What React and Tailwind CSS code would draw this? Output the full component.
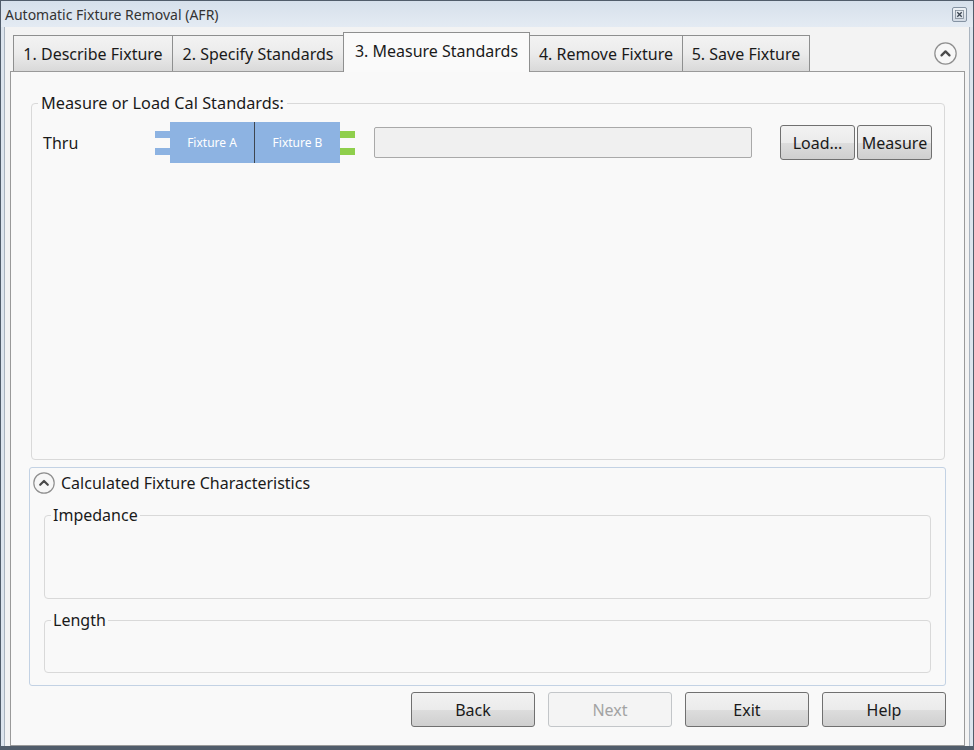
import React from "react";

const font = "font-['Noto_Sans','Open_Sans',sans-serif]";

function Chevron({ size = 22 }) {
  return (
    <svg width={size} height={size} viewBox="0 0 22 22">
      <circle cx="11" cy="11" r="10.2" fill="#f7f7f7" stroke="#8f8f8f" strokeWidth="1.2" />
      <path d="M7.2 12.8 L11 9 L14.8 12.8" fill="none" stroke="#4a4a4a" strokeWidth="2.2" strokeLinecap="round" strokeLinejoin="round" />
    </svg>
  );
}

function Tab({ label, active, w }) {
  if (active) {
    return (
      <div className={`${w} h-[40px] -mb-[1px] -ml-[1px] relative z-10 border border-b-0 border-[#8e8f8f] bg-[#fafafa] flex items-start justify-center pt-[7px] text-[16px] leading-[22px] text-[#1a1a1a]`}>
        {label}
      </div>
    );
  }
  return (
    <div className={`${w} h-[36px] -ml-[1px] first:ml-0 border border-b-0 border-[#8e8f8f] bg-gradient-to-b from-[#f3f3f3] via-[#ebebeb] to-[#d9d9d9] flex items-center justify-center text-[16px] leading-[22px] text-[#1a1a1a]`}>
      {label}
    </div>
  );
}

function Btn({ children, className = "", disabled }) {
  if (disabled) {
    return (
      <div className={`flex items-center justify-center rounded-[3px] border border-[#c3c6c9] bg-[#f4f4f4] text-[#a3a3a3] text-[16px] ${className}`}>
        {children}
      </div>
    );
  }
  return (
    <div className={`flex items-center justify-center rounded-[3px] border border-[#707070] bg-[linear-gradient(to_bottom,#f2f2f2_0%,#ebebeb_50%,#dddddd_51%,#cfcfcf_100%)] text-[#1a1a1a] text-[16px] ${className}`}>
      {children}
    </div>
  );
}

export default function App() {
  return (
    <div className={`${font} w-[974px] h-[750px] bg-[#515d6b] pt-[1px] px-[1px] pb-[4px] flex flex-col`}>
      <div className="flex-1 flex flex-col bg-[#dde5ee] px-[3px]">
        {/* Title bar */}
        <div className="h-[26px] -mx-[3px] px-[4px] flex items-center justify-between bg-gradient-to-b from-[#d6e0eb] to-[#e4ebf3]">
          <span className="text-[14px] text-[#333] leading-none pt-[1px]">Automatic Fixture Removal (AFR)</span>
          <div className="w-[15px] h-[15px] mr-[2px] mt-[1px] rounded-[2px] border border-[#8593a3] bg-gradient-to-b from-[#eef2f6] to-[#d3dbe5] flex items-center justify-center">
            <svg width="9" height="9" viewBox="0 0 9 9">
              <rect x="0.5" y="0.5" width="8" height="8" fill="none" stroke="#7f8a96" strokeWidth="0.8" />
              <path d="M2.3 2.3 L6.7 6.7 M6.7 2.3 L2.3 6.7" stroke="#3c4652" strokeWidth="1.3" />
            </svg>
          </div>
        </div>
        {/* Client */}
        <div className="flex-1 flex flex-col bg-[#f3f3f3] border-x border-[#aab4bf] pl-[5px] pr-[4px] pt-[5px]">
          {/* Tabs row */}
          <div className="h-[39px] flex items-end pl-[3px] relative">
            <Tab w="w-[160px]" label="1. Describe Fixture" />
            <Tab w="w-[172px]" label="2. Specify Standards" />
            <Tab w="w-[187px]" label="3. Measure Standards" active />
            <Tab w="w-[154px]" label="4. Remove Fixture" />
            <Tab w="w-[128px]" label="5. Save Fixture" />
            <div className="flex-1" />
            <div className="self-start mt-[10px] mr-[8px]">
              <Chevron size={23} />
            </div>
          </div>
          {/* Panel */}
          <div className="flex-1 border border-[#9a9a9a] bg-[#f9f9f9] flex flex-col">
            {/* Group 1 */}
            <fieldset className="mt-[21px] ml-[20px] mr-[19px] h-[367px] border border-[#d9d9d9] rounded-[4px] px-0">
              <legend className="ml-[6px] px-[3px] text-[16.3px] leading-[20px] text-[#1a1a1a]">Measure or Load Cal Standards:</legend>
              <div className="mt-[9px] h-[41px] flex items-center">
                <div className="w-[112px] ml-[11px] text-[16px] text-[#1a1a1a]">Thru</div>
                {/* Fixture diagram */}
                <div className="flex items-center">
                  <div className="flex flex-col gap-[10px]">
                    <div className="w-[15px] h-[7px] bg-[#8db3e2]" />
                    <div className="w-[15px] h-[7px] bg-[#8db3e2]" />
                  </div>
                  <div className="h-[41px] flex bg-[#8db3e2] text-white text-[12px]">
                    <div className="w-[85px] flex items-center justify-center border-r border-[#3e4650]">Fixture A</div>
                    <div className="w-[85px] flex items-center justify-center">Fixture B</div>
                  </div>
                  <div className="flex flex-col gap-[10px]">
                    <div className="w-[15px] h-[7px] bg-[#8fcf4c]" />
                    <div className="w-[15px] h-[7px] bg-[#8fcf4c]" />
                  </div>
                </div>
                <div className="ml-[19px] w-[378px] h-[31px] rounded-[2px] border border-[#a9a9a9] bg-[#f0f0f0]" />
                <Btn className="ml-[28px] w-[75px] h-[35px]">Load...</Btn>
                <Btn className="ml-[2px] w-[75px] h-[35px]">Measure</Btn>
              </div>
            </fieldset>
            {/* Group 2 */}
            <div className="mt-[7px] ml-[18px] mr-[18px] h-[219px] border border-[#c3d2e4] rounded-[3px] flex flex-col px-[14px] pb-[12px]">
              <div className="mt-[4px] -ml-[11px] h-[22px] flex items-center gap-[6px]">
                <Chevron size={22} />
                <span className="text-[16px] text-[#1a1a1a]">Calculated Fixture Characteristics</span>
              </div>
              <fieldset className="mt-[11px] h-[94px] border border-[#d9d9d9] rounded-[4px]">
                <legend className="ml-[6px] px-[2px] text-[16px] leading-[20px] text-[#1a1a1a]">Impedance</legend>
              </fieldset>
              <fieldset className="mt-[11px] h-[63px] border border-[#d9d9d9] rounded-[4px]">
                <legend className="ml-[6px] px-[2px] text-[16px] leading-[20px] text-[#1a1a1a]">Length</legend>
              </fieldset>
            </div>
            {/* Buttons */}
            <div className="mt-[6px] mr-[18px] flex justify-end gap-[13px]">
              <Btn className="w-[124px] h-[35px]">Back</Btn>
              <Btn className="w-[124px] h-[35px]" disabled>Next</Btn>
              <Btn className="w-[124px] h-[35px]">Exit</Btn>
              <Btn className="w-[124px] h-[35px]">Help</Btn>
            </div>
          </div>
        </div>
      </div>
    </div>
  );
}
